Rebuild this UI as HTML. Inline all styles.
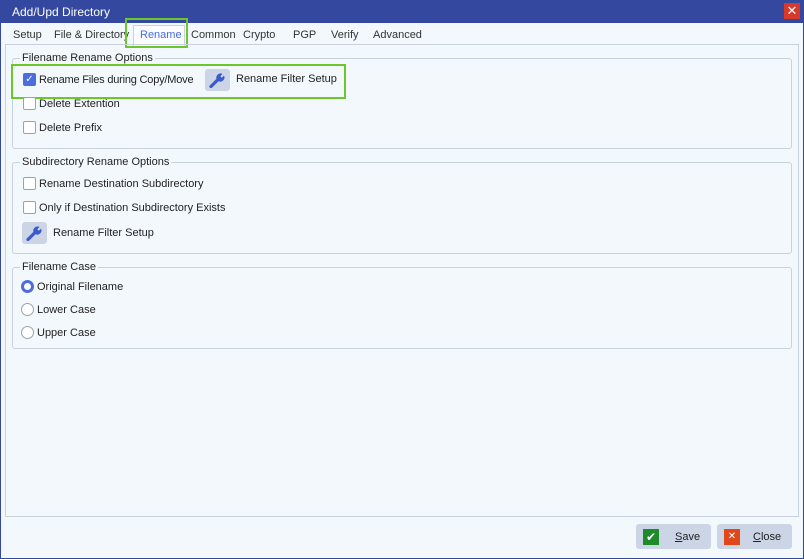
<!DOCTYPE html><html><head><style>
body{margin:0;width:804px;height:559px;overflow:hidden;font-family:"Liberation Sans",sans-serif;font-size:11px;color:#222;background:#f3f8fd;position:relative}
.a{position:absolute}
.grp{position:absolute;left:12px;width:778px;border:1px solid #c8d2de;border-radius:3px}
.lg{position:absolute;left:7px;top:-7px;background:#f3f8fd;padding:0 2px}
.cb{position:absolute;width:11px;height:11px;border:1px solid #9aa3ad;background:#fff;border-radius:2px}
.rb{position:absolute;width:11px;height:11px;border:1px solid #9aa3ad;background:#fff;border-radius:50%}
.wr{position:absolute;width:25px;height:22px;background:#ccd5e5;border-radius:3px}
.wr svg{position:absolute;left:4px;top:3px}
</style></head><body>
<div class="a" style="left:0;top:0;width:804px;height:559px;box-sizing:border-box;border:1px solid #3448a0;border-top:none"></div>
<div class="a" style="left:0;top:0;width:804px;height:23px;background:#3448a0;color:#fff;font-size:12px"><span class="a" style="left:12px;top:5px">Add/Upd Directory</span>
<div class="a" style="left:784px;top:3px;width:16px;height:16px;background:#d8392b;color:#fff;text-align:center;line-height:16px;font-size:13px">✕</div></div>
<div class="a" style="left:13px;top:29px;color:#333">Setup</div>
<div class="a" style="left:54px;top:29px;color:#333">File &amp; Directory</div>
<div class="a" style="left:133px;top:25px;width:50px;height:20px;background:#fafcff;border:1px solid #c8d2de;border-bottom:none"></div>
<div class="a" style="left:140px;top:29px;color:#4a6de0">Rename</div>
<div class="a" style="left:125px;top:18px;width:59px;height:26px;border:2px solid #6cc72a"></div>
<div class="a" style="left:191px;top:29px;color:#333">Common</div>
<div class="a" style="left:243px;top:29px;color:#333">Crypto</div>
<div class="a" style="left:293px;top:29px;color:#333">PGP</div>
<div class="a" style="left:331px;top:29px;color:#333">Verify</div>
<div class="a" style="left:373px;top:29px;color:#333">Advanced</div>
<div class="a" style="left:5px;top:44px;width:794px;height:473px;border:1px solid #c8d2de;box-sizing:border-box"></div>

<div class="grp" style="top:58px;height:89px"><span class="lg">Filename Rename Options</span></div>
<div class="a" style="left:11px;top:64px;width:331px;height:31px;border:2px solid #6cc72a"></div>
<div class="cb" style="left:23px;top:73px;background:#4a6de0;border-color:#4a6de0;color:#fff;font-size:10px;line-height:11px;text-align:center">✓</div>
<div class="a" style="left:39px;top:74px;letter-spacing:-0.2px">Rename Files during Copy/Move</div>
<div class="wr" style="left:205px;top:69px"><svg width="17" height="16" viewBox="0 0 17 16"><path d="M2 14.5 L9 7.5" stroke="#3a5bd0" stroke-width="3.2" stroke-linecap="round"/><path d="M8 8 A4.2 4.2 0 0 1 13.5 2 L11.3 4.3 L12.8 5.8 L15 3.6 A4.2 4.2 0 0 1 9 9 Z" fill="#3a5bd0"/></svg></div>
<div class="a" style="left:236px;top:73px">Rename Filter Setup</div>
<div class="cb" style="left:23px;top:97px"></div><div class="a" style="left:39px;top:98px">Delete Extention</div>
<div class="cb" style="left:23px;top:121px"></div><div class="a" style="left:39px;top:122px">Delete Prefix</div>

<div class="grp" style="top:162px;height:90px"><span class="lg">Subdirectory Rename Options</span></div>
<div class="cb" style="left:23px;top:177px"></div><div class="a" style="left:39px;top:178px">Rename Destination Subdirectory</div>
<div class="cb" style="left:23px;top:201px"></div><div class="a" style="left:39px;top:202px">Only if Destination Subdirectory Exists</div>
<div class="wr" style="left:22px;top:222px"><svg width="17" height="16" viewBox="0 0 17 16"><path d="M2 14.5 L9 7.5" stroke="#3a5bd0" stroke-width="3.2" stroke-linecap="round"/><path d="M8 8 A4.2 4.2 0 0 1 13.5 2 L11.3 4.3 L12.8 5.8 L15 3.6 A4.2 4.2 0 0 1 9 9 Z" fill="#3a5bd0"/></svg></div>
<div class="a" style="left:53px;top:227px">Rename Filter Setup</div>

<div class="grp" style="top:267px;height:80px"><span class="lg">Filename Case</span></div>
<div class="rb" style="left:21px;top:280px;border:3px solid #4a6de0;width:7px;height:7px"></div><div class="a" style="left:37px;top:281px">Original Filename</div>
<div class="rb" style="left:21px;top:303px"></div><div class="a" style="left:37px;top:304px">Lower Case</div>
<div class="rb" style="left:21px;top:326px"></div><div class="a" style="left:37px;top:327px">Upper Case</div>

<div class="a" style="left:636px;top:524px;width:75px;height:25px;background:#ccd5e5;border-radius:3px"></div>
<div class="a" style="left:643px;top:529px;width:16px;height:16px;background:#1f8a2a;color:#fff;text-align:center;line-height:16px;font-size:12px">✔</div>
<div class="a" style="left:675px;top:531px"><u>S</u>ave</div>
<div class="a" style="left:717px;top:524px;width:75px;height:25px;background:#ccd5e5;border-radius:3px"></div>
<div class="a" style="left:724px;top:529px;width:16px;height:16px;background:#e0481c;color:#fff;text-align:center;line-height:16px;font-size:10px">✕</div>
<div class="a" style="left:753px;top:531px"><u>C</u>lose</div>
</body></html>
